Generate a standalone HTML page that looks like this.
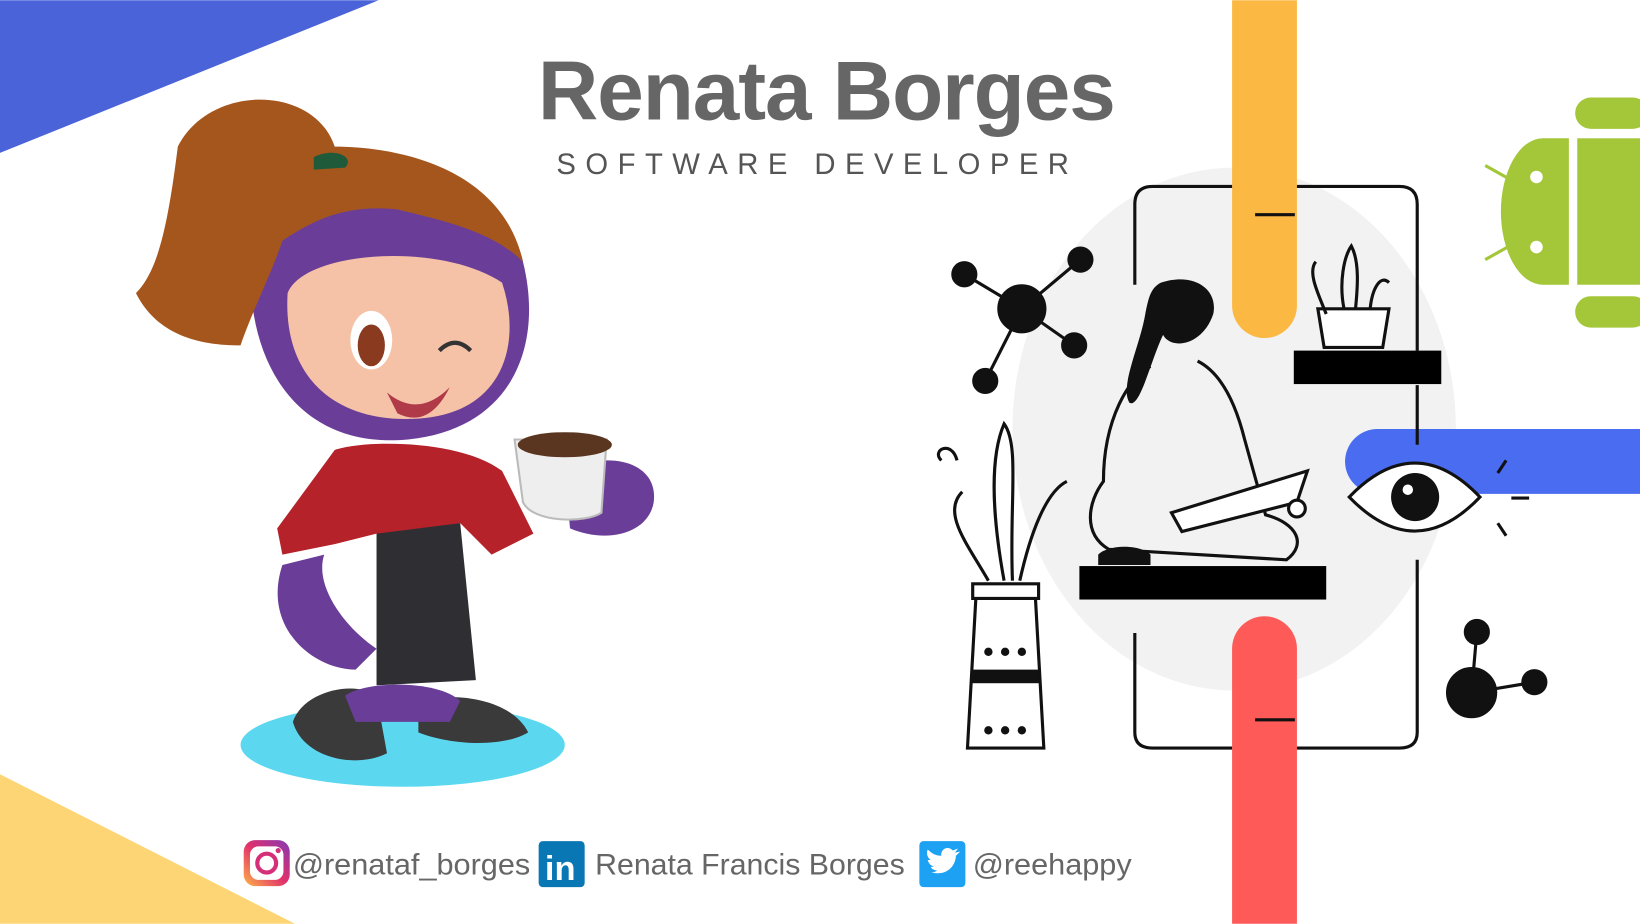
<!DOCTYPE html>
<html><head><meta charset="utf-8"><style>
html,body{margin:0;padding:0;background:#fff;overflow:hidden}
svg{display:block}
</style></head><body>
<svg width="1640" height="924" viewBox="0 0 1568 883" xmlns="http://www.w3.org/2000/svg">
<rect width="1568" height="883" fill="#fff"/>
<polygon points="0,0 362,0 0,146" fill="#4a63d8"/>
<polygon points="0,740 0,883 282,883" fill="#fdd574"/>
<ellipse cx="1180" cy="410" rx="212" ry="250" fill="#f2f2f2"/>
<path d="M1178,0 H1240 V292 A31,31 0 0 1 1178,292 Z" fill="#fbb944"/>
<path d="M1178,883 H1240 V620 A31,31 0 0 0 1178,620 Z" fill="#fd5a58"/>
<path d="M1568,410 V472 H1317 A31,31 0 0 1 1317,410 Z" fill="#4a6cf0"/>
<g fill="#a4c639">
<rect x="1506" y="93" width="70" height="30" rx="15"/>
<rect x="1506" y="283" width="70" height="30" rx="15"/>
<path d="M1500,132 V272 H1475 A40,70 0 0 1 1475,132 Z"/>
<rect x="1508" y="132" width="60" height="140"/>
<line x1="1420" y1="158" x2="1445" y2="172" stroke="#a4c639" stroke-width="3"/>
<line x1="1420" y1="248" x2="1445" y2="234" stroke="#a4c639" stroke-width="3"/>
</g>
<circle cx="1469" cy="169" r="6" fill="#fff"/><circle cx="1469" cy="236" r="6" fill="#fff"/>
<g fill="none" stroke="#111" stroke-width="3">
<path d="M1085,272 V195 Q1085,178 1102,178 H1178"/>
<path d="M1240,178 H1338 Q1355,178 1355,195 V335"/>
<path d="M1355,368 V425"/>
<path d="M1355,535 V700 Q1355,715 1338,715 H1240"/>
<path d="M1178,715 H1102 Q1085,715 1085,700 V605"/>
<line x1="1200" y1="205" x2="1238" y2="205"/><line x1="1200" y1="688" x2="1238" y2="688"/>
</g>
<rect x="1237" y="335" width="141" height="32" fill="#000"/>
<rect x="1032" y="541" width="236" height="32" fill="#000"/>
<path d="M1260,295 H1328 L1322,332 H1266 Z" fill="#fff" stroke="#111" stroke-width="3"/>
<path d="M1268,300 C1260,280 1250,260 1258,250 M1285,295 C1280,270 1285,245 1292,235 C1300,250 1298,275 1296,295 M1310,295 C1312,275 1320,262 1328,270" fill="none" stroke="#111" stroke-width="3"/>
<g fill="none" stroke="#111" stroke-width="3">
<path d="M1100,350 C1080,360 1055,400 1055,460 C1040,480 1035,510 1060,525 L1230,535 C1250,520 1240,500 1210,492 L1190,420 C1180,380 1165,355 1145,345"/>
<path d="M1120,490 L1250,450 L1240,480 L1130,508 Z" fill="#fff"/>
<circle cx="1240" cy="486" r="8" fill="#fff"/>
</g>
<path d="M1110,270 C1140,260 1165,275 1160,300 C1150,330 1120,335 1112,320 C1100,345 1090,390 1080,385 C1070,370 1090,330 1095,300 C1098,285 1100,275 1110,270 Z" fill="#111"/>
<path d="M1050,530 C1060,520 1090,520 1100,530 L1100,540 H1050 Z" fill="#111"/>
<g stroke="#111" stroke-width="3" fill="#111">
<line x1="922" y1="262" x2="977" y2="295"/><line x1="977" y1="295" x2="1033" y2="248"/>
<line x1="977" y1="295" x2="1027" y2="330"/><line x1="977" y1="295" x2="942" y2="364"/>
<circle cx="977" cy="295" r="22"/><circle cx="922" cy="262" r="11"/><circle cx="1033" cy="248" r="11"/>
<circle cx="1027" cy="330" r="11"/><circle cx="942" cy="364" r="11"/>
<line x1="1412" y1="604" x2="1407" y2="662"/><line x1="1407" y1="662" x2="1467" y2="652"/>
<circle cx="1407" cy="662" r="23"/><circle cx="1412" cy="604" r="11"/><circle cx="1467" cy="652" r="11"/>
</g>
<path d="M1290,475 Q1353,410 1415,475 Q1353,540 1290,475 Z" fill="#fff" stroke="#111" stroke-width="3"/>
<circle cx="1353" cy="475" r="23" fill="#111"/><circle cx="1346" cy="468" r="5" fill="#fff"/>
<g stroke="#111" stroke-width="3"><line x1="1432" y1="452" x2="1440" y2="440"/><line x1="1445" y1="476" x2="1462" y2="476"/><line x1="1432" y1="500" x2="1440" y2="512"/></g>
<g fill="none" stroke="#111" stroke-width="3">
<path d="M930,558 H993 V572 H930 Z"/><path d="M933,572 L925,715 H998 L990,572"/>
<path d="M945,555 C925,520 900,490 920,470 M960,555 C950,500 945,440 960,405 C975,425 965,480 968,555 M975,555 C985,510 1000,470 1020,460 M900,440 C890,430 910,420 915,440"/>
</g>
<rect x="928" y="640" width="66" height="13" fill="#111"/>
<g fill="#111"><circle cx="945" cy="623" r="4"/><circle cx="961" cy="623" r="4"/><circle cx="977" cy="623" r="4"/><circle cx="945" cy="698" r="4"/><circle cx="961" cy="698" r="4"/><circle cx="977" cy="698" r="4"/></g>
<ellipse cx="385" cy="712" rx="155" ry="40" fill="#5bd8f0"/>
<path d="M280,690 C290,660 340,650 360,665 L370,720 C340,735 290,725 280,690 Z" fill="#3a3a3a"/>
<path d="M400,670 C440,660 490,670 505,700 C480,715 430,712 400,700 Z" fill="#3a3a3a"/>
<path d="M360,500 L440,500 L455,650 L360,655 Z" fill="#2f2f33"/>
<path d="M270,540 C250,600 300,640 340,640 L360,620 C330,600 300,560 310,530 Z" fill="#6a3e98"/>
<path d="M330,665 C350,650 420,650 440,670 L430,690 L340,690 Z" fill="#6a3e98"/>
<path d="M320,430 C350,420 440,420 480,450 L510,510 L470,530 L440,500 L360,510 L320,520 L270,530 L265,505 Z" fill="#b5222a"/>
<path d="M540,450 C580,430 630,440 625,480 C620,510 580,520 545,505 Z" fill="#6a3e98"/>
<path d="M492,420 L580,420 L575,490 C560,500 510,500 500,480 Z" fill="#eee" stroke="#bbb" stroke-width="2"/>
<ellipse cx="540" cy="425" rx="45" ry="12" fill="#5a3520"/>
<path d="M240,250 C240,160 480,150 500,250 C520,330 490,410 390,420 C280,430 235,340 240,250 Z" fill="#6a3e98"/>
<path d="M275,280 C290,240 420,230 480,270 C500,330 480,395 400,400 C320,405 270,360 275,280 Z" fill="#f6c2a7"/>
<ellipse cx="355" cy="325" rx="20" ry="28" fill="#fff"/><ellipse cx="355" cy="330" rx="13" ry="20" fill="#8a3a1e"/>
<path d="M420,335 Q435,320 450,335" stroke="#333" stroke-width="4" fill="none"/>
<path d="M370,375 Q400,400 430,370 Q410,410 380,395 Z" fill="#b03a48"/>
<path d="M170,140 C200,80 300,80 320,140 C380,140 480,160 500,250 C470,220 420,210 380,200 C330,195 300,210 270,230 C260,260 240,300 230,330 C190,330 150,320 130,280 C150,260 160,220 170,140 Z" fill="#a5561d"/>
<path d="M300,150 C320,140 340,150 330,160 L300,162 Z" fill="#1f5a3a"/>
<text x="790" y="114" text-anchor="middle" font-family="Liberation Sans, sans-serif" font-weight="bold" font-size="80" fill="#666" letter-spacing="-1">Renata Borges</text>
<text x="532" y="166" font-family="Liberation Sans, sans-serif" font-size="28" fill="#555" textLength="490" lengthAdjust="spacing">SOFTWARE DEVELOPER</text>
<defs><linearGradient id="ig" x1="0" y1="1" x2="1" y2="0"><stop offset="0" stop-color="#fdb447"/><stop offset=".5" stop-color="#e1306c"/><stop offset="1" stop-color="#833ab4"/></linearGradient></defs>
<rect x="233" y="803" width="44" height="44" rx="11" fill="url(#ig)"/>
<rect x="239" y="809" width="32" height="32" rx="8" fill="#fff"/>
<circle cx="255" cy="825" r="9" fill="none" stroke="#d62f7a" stroke-width="4"/><circle cx="266" cy="813" r="2.5" fill="#d62f7a"/>
<text x="280" y="836" font-family="Liberation Sans, sans-serif" font-size="28" fill="#666" textLength="227" lengthAdjust="spacingAndGlyphs">@renataf_borges</text>
<rect x="515" y="804" width="44" height="44" rx="4" fill="#0a77b5"/>
<text x="521" y="841" font-family="Liberation Sans, sans-serif" font-weight="bold" font-size="33" fill="#fff">in</text>
<text x="569" y="836" font-family="Liberation Sans, sans-serif" font-size="28" fill="#666" textLength="296" lengthAdjust="spacingAndGlyphs">Renata Francis Borges</text>
<rect x="879" y="804" width="44" height="44" rx="4" fill="#1da1f2"/>
<path d="M889,833 C900,838 913,832 914,818 L918,814 L913,815 L916,811 L911,813 C907,808 899,811 900,818 C894,818 890,815 887,812 C885,817 888,821 890,822 L887,822 C888,826 891,828 893,828 L890,829 C891,831 894,832 896,832 C894,834 891,834 889,833 Z" fill="#fff"/>
<text x="930" y="836" font-family="Liberation Sans, sans-serif" font-size="28" fill="#666" textLength="152" lengthAdjust="spacingAndGlyphs">@reehappy</text>
</svg>
</body></html>
